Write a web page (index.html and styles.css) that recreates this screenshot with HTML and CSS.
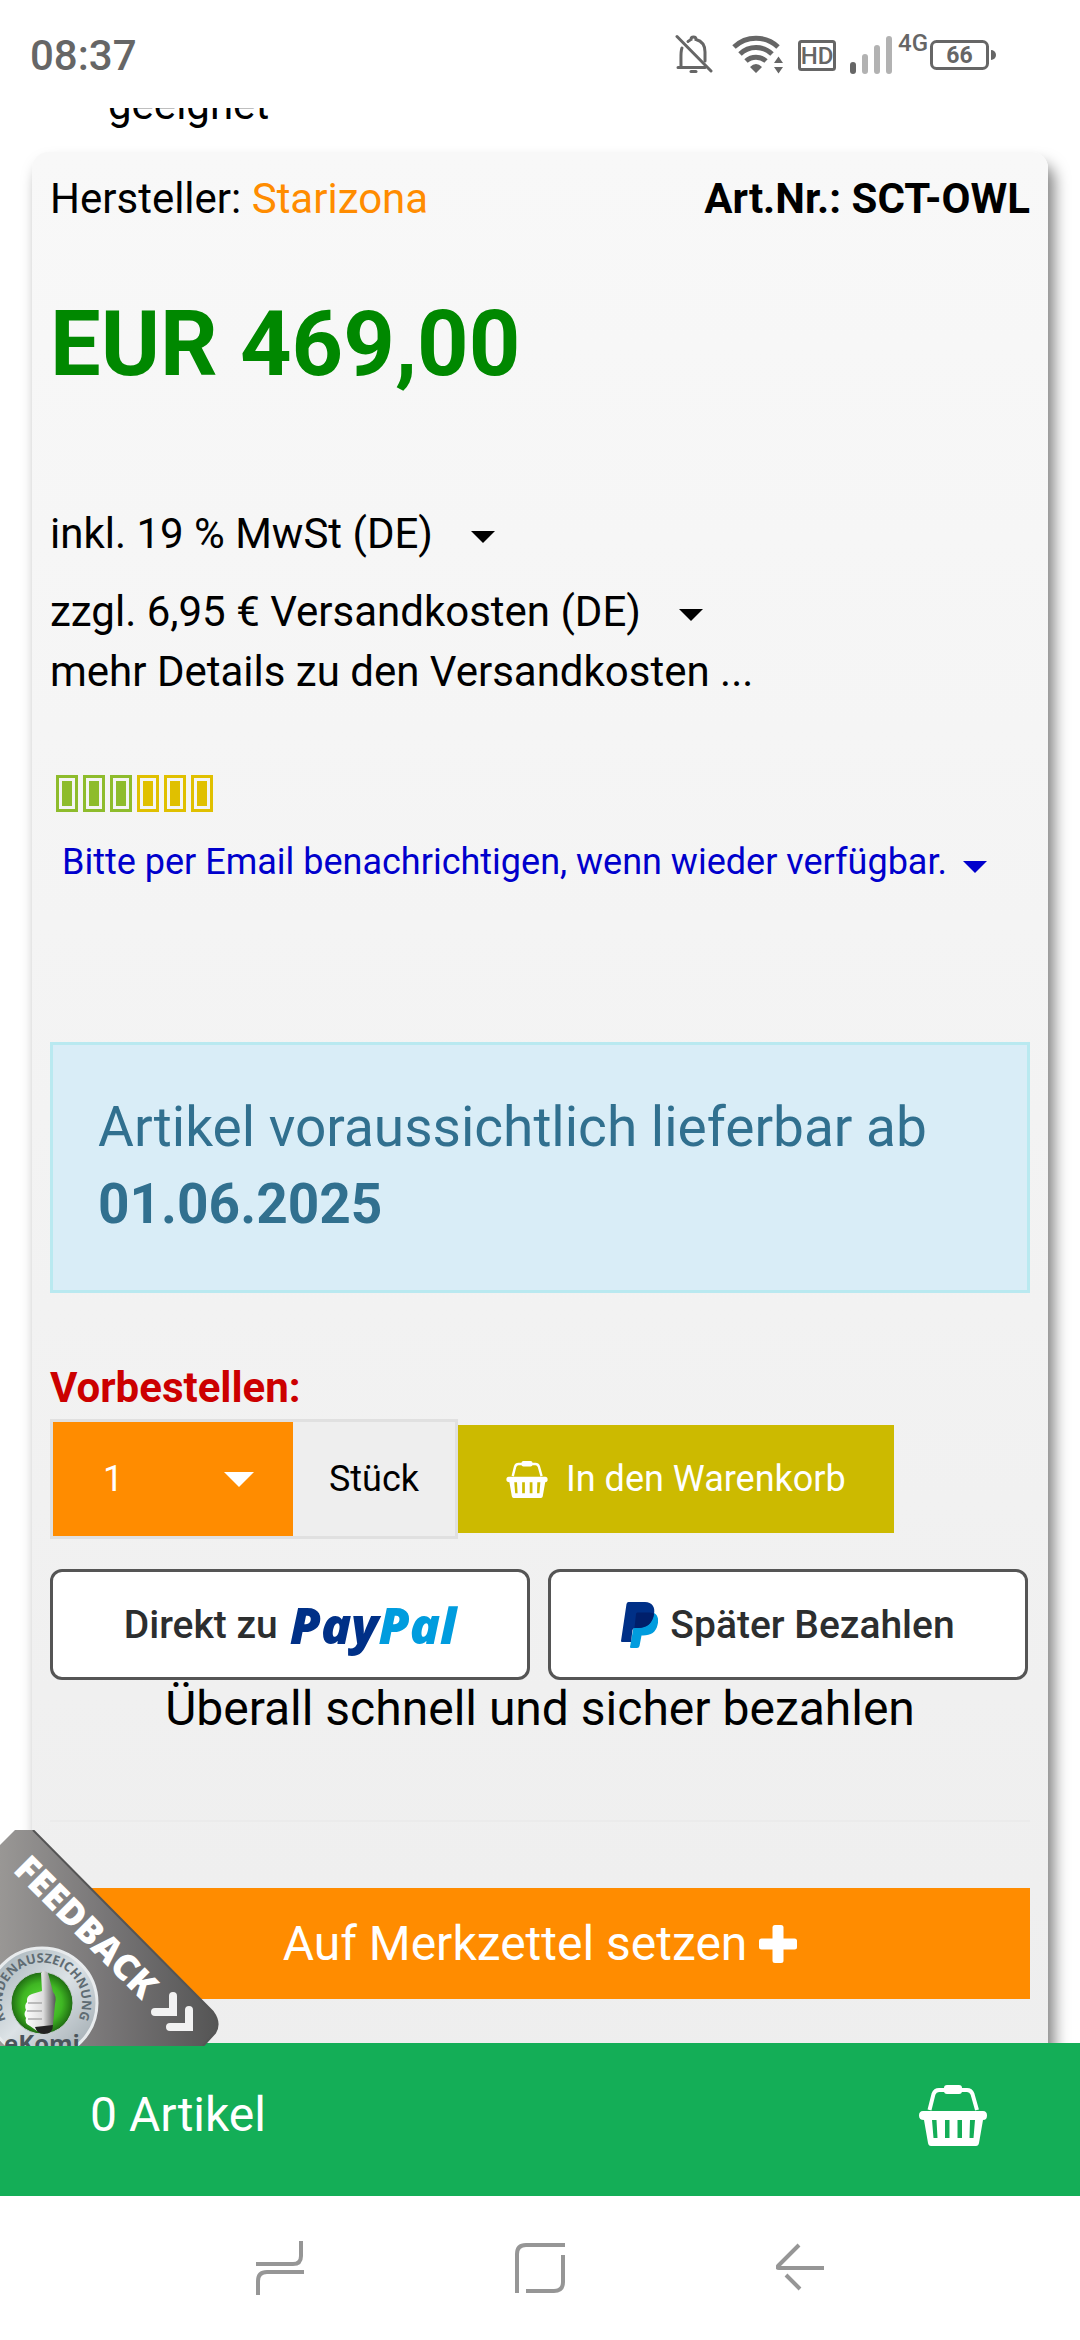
FILE: index.html
```html
<!DOCTYPE html>
<html lang="de">
<head>
  <meta charset="UTF-8">
  <meta name="viewport" content="width=device-width, initial-scale=1.0">
  <title>Starizona SCT-OWL</title>
  <link rel="stylesheet" href="styles.css">
</head>
<body>
  <header class="statusbar">
    <span class="time">08:37</span>
    <div class="status-icons">
      <svg class="ic-bell" width="38" height="40" viewBox="0 0 38 40" fill="none" stroke="#666" stroke-width="3" stroke-linecap="round">
        <path d="M2 2.500 L36 37"/>
        <path d="M7 14 C5.500 17 6 21 6 33 M3 33.500 H30 M13 7.500 C14 6.500 15 6 16 5.500 C16 2 21 2 21 5.500 C27 7 30 12 30 18 V27"/>
        <path d="M16 37.500 H21"/>
      </svg>
      <svg class="ic-wifi" width="52" height="40" viewBox="0 0 52 40">
        <g fill="none" stroke="#666" stroke-width="5">
          <path d="M2 13 A32 32 0 0 1 46 13"/>
          <path d="M8 20 A23 23 0 0 1 40 20"/>
          <path d="M14 27 A15 15 0 0 1 34 27"/>
        </g>
        <path d="M18 33 Q24 27 30 33 L24 39 Z M42 29 L46.500 22.500 L51 29 Z M42 33 L46.500 39.500 L51 33 Z" fill="#666"/>
      </svg>
      <svg class="ic-hd" width="38" height="40" viewBox="0 0 38 40">
        <rect x="1.500" y="7.500" width="35" height="28" rx="2" fill="none" stroke="#666" stroke-width="3"/>
        <text x="19" y="30" text-anchor="middle" font-size="24" font-weight="500" fill="#666">HD</text>
      </svg>
      <svg class="ic-signal" width="42" height="40" viewBox="0 0 42 40" stroke-width="6" stroke-linecap="round">
        <path d="M3 31 V37" stroke="#666"/>
        <path d="M15 23 V37 M27 14 V37 M39 5 V37" stroke="#b2b2b2"/>
      </svg>
      <span class="net">4G</span>
      <svg class="ic-battery" width="66" height="40" viewBox="0 0 66 40">
        <rect x="1.500" y="7.500" width="56" height="27" rx="5" fill="none" stroke="#666" stroke-width="3"/>
        <path d="M61 16 A5 5 0 0 1 61 26 Z" fill="#666"/>
        <text x="29.500" y="29" text-anchor="middle" font-size="23" font-weight="bold" fill="#666">66</text>
      </svg>
    </div>
  </header>

  <main class="content">
    <p class="description">geeignet</p>

    <section class="card">
      <div class="meta">
        <span>Hersteller: <a class="brand" href="#starizona">Starizona</a></span>
        <strong>Art.Nr.: SCT-OWL</strong>
      </div>

      <div class="price">EUR 469,00</div>

      <button class="dropdown tax" type="button">inkl. 19 % MwSt (DE)
        <svg width="24" height="12" viewBox="0 0 24 12"><path d="M0 0 H24 L12 12 Z"/></svg>
      </button>
      <button class="dropdown shipping" type="button">zzgl. 6,95 € Versandkosten (DE)
        <svg width="24" height="12" viewBox="0 0 24 12"><path d="M0 0 H24 L12 12 Z"/></svg>
      </button>
      <a class="details" href="#versand">mehr Details zu den Versandkosten ...</a>

      <div class="stock">
        <i class="green"></i><i class="green"></i><i class="green"></i><i></i><i></i><i></i>
      </div>
      <button class="dropdown notify" type="button">Bitte per Email benachrichtigen, wenn wieder verfügbar.
        <svg width="24" height="12" viewBox="0 0 24 12"><path d="M0 0 H24 L12 12 Z"/></svg>
      </button>

      <div class="alert">Artikel voraussichtlich lieferbar ab <strong>01.06.2025</strong></div>

      <label class="preorder" for="qty">Vorbestellen:</label>
      <div class="buy">
        <div class="qty">
          <div class="qty-select">
            <select id="qty">
              <option>1</option>
              <option>2</option>
              <option>3</option>
            </select>
            <svg width="30" height="15" viewBox="0 0 30 15"><path d="M0 0 H30 L15 15 Z" fill="#fff"/></svg>
          </div>
          <span class="unit">Stück</span>
        </div>
        <button class="cart-btn" type="button">
          <svg width="42" height="37" viewBox="0 0 68 61"><use href="#basket"/></svg>
          In den Warenkorb
        </button>
      </div>

      <div class="paypal">
        <button type="button">Direkt zu <span class="pp-logo">Pay<span>Pal</span></span></button>
        <button type="button">
          <svg width="37" height="46" viewBox="0 0 37 46">
            <path d="M15 11 H33 C37 13 38 18 36.500 23 C35 30 30 33.500 22 33.500 H20.500 L18.500 44 Q18 46 16 46 H10 Q9 46 9 45 Z" fill="#009cde"/>
            <path d="M7.500 0 H24 C31 0 34.500 5 33 12 C31.500 21 26 26 17 26 H13.500 Q12 26 11.500 28 L10 40 H1 Q0 40 0 39 L5.500 2 Q6 0 7.500 0 Z" fill="#003087"/>
            <path d="M16.500 10.500 H29 Q31.500 10.500 33 12 C31.500 21 26 26 17 26 H13.500 L15 12 Q15 10.500 16.500 10.500 Z" fill="#001f6b"/>
          </svg>
          Später Bezahlen
        </button>
      </div>
      <p class="pp-note">Überall schnell und sicher bezahlen</p>

      <hr class="divider">

      <button class="wishlist" type="button">Auf Merkzettel setzen
        <svg width="38" height="38" viewBox="0 0 38 38" fill="#fff"><rect x="13.500" width="11" height="38" rx="2.500"/><rect y="13.500" width="38" height="11" rx="2.500"/></svg>
      </button>
    </section>
  </main>

  <footer class="cartbar">
    <a href="#warenkorb">0 Artikel</a>
    <svg width="68" height="61" viewBox="0 0 68 61">
      <g id="basket" fill="#fff">
        <path d="M10.500 25 L14.500 9 Q16 5 20 5 H48 Q52 5 53.500 9 L58 25" fill="none" stroke="#fff" stroke-width="4"/>
        <rect x="25" y="0" width="18" height="9" rx="3"/>
        <path fill-rule="evenodd" d="M4 26 H64 Q68 26 68 30.500 Q68 35 64 35 L60 58 Q59.500 61 57 61 H12 Q9.500 61 9 58 L5 35 Q0 35 0 30.500 Q0 26 4 26 Z M13 35 L14.500 53 H18.500 L17.500 35 Z M26 35 V53 H30.500 V35 Z M38.500 35 V53 H43 V35 Z M51 35 L50.500 53 H54.500 L56 35 Z"/>
      </g>
    </svg>

    <a class="feedback" href="#feedback" aria-label="Feedback">
      <svg width="219" height="216" viewBox="0 0 219 216">
        <defs>
          <linearGradient id="fb-bg"><stop offset="0" stop-color="#999795"/><stop offset="0.5" stop-color="#777576"/><stop offset="1" stop-color="#555"/></linearGradient>
          <linearGradient id="fb-ring" x1="0" y1="0" x2="1" y2="1"><stop offset="0" stop-color="#9eabb2"/><stop offset="0.5" stop-color="#dce2e6"/><stop offset="1" stop-color="#98a3a9"/></linearGradient>
          <radialGradient id="fb-green"><stop offset="0" stop-color="#5fe03c"/><stop offset="0.65" stop-color="#3fb623"/><stop offset="1" stop-color="#1f6b12"/></radialGradient>
          <linearGradient id="fb-hand"><stop offset="0" stop-color="#fff"/><stop offset="0.6" stop-color="#ddd"/><stop offset="1" stop-color="#555"/></linearGradient>
          <path id="fb-arc" d="M6 190 A40 40 0 1 1 78 190"/>
        </defs>
        <path d="M0 15 L15 0 H33 L213 182 Q221 193 215 203 L203 216 H0 Z" fill="url(#fb-bg)"/>
        <path d="M33 0 L213 182 Q221 193 215 203 L203 216" fill="none" stroke="#555" stroke-width="2"/>
        <g transform="translate(12 41) rotate(45)">
          <text class="fb-text" x="0" y="0">FEEDBACK</text>
        </g>
        <path d="M155 182 H173 V166 M170 197 H189 V180" fill="none" stroke="#f2f2f2" stroke-width="8" stroke-linecap="round"/>
        <circle cx="42" cy="173" r="55" fill="url(#fb-ring)" stroke="#e8ebed" stroke-width="3"/>
        <text class="fb-ring-text"><textPath href="#fb-arc">KUNDENAUSZEICHNUNG</textPath></text>
        <circle cx="42" cy="173" r="31" fill="url(#fb-green)" stroke="#c9d0d4" stroke-width="1"/>
        <path d="M41 143 Q44 139 48 143 L53 162 Q57 166 55 174 L53 194 Q52 201 46 202 L37 201 L30 196 Q24 193 26 188 Q23 184 26 180 Q24 175 27 172 Q26 166 32 164 L42 161 Z" fill="url(#fb-hand)"/>
        <path d="M28 173 H42 M27 181 H42 M28 189 H42" stroke="#aaa" stroke-width="1.500"/>
        <path d="M35 197 L53 195 Q53 204 44 204 Q37 204 35 197 Z" fill="#222"/>
        <text class="fb-name" x="42" y="222" text-anchor="middle">eKomi</text>
      </svg>
    </a>
  </footer>

  <nav class="navbar">
    <button type="button" aria-label="Letzte Apps">
      <svg width="48" height="54" viewBox="0 0 48 54"><path d="M0 23 H37 Q45 23 45 15 V0 M48 31 H11 Q2 31 2 40 V54"/></svg>
    </button>
    <button type="button" aria-label="Startseite">
      <svg width="50" height="50" viewBox="0 0 50 50"><path d="M2 50 V11 Q2 2 11 2 H50 M48 12 V39 Q48 48 39 48 H11"/></svg>
    </button>
    <button type="button" aria-label="Zurück">
      <svg width="48" height="50" viewBox="0 0 48 50"><path d="M23 2 L3 22 Q0 25 3 25 H48 M10 32 L24 46"/></svg>
    </button>
  </nav>
</body>
</html>
```

FILE: styles.css
```css
* { margin:0; padding:0; box-sizing:border-box; }
body {
  display:flex; flex-direction:column; height:100vh; overflow:hidden;
  font-family:Roboto, sans-serif; font-size:42px; line-height:60px; color:#000; background:#fff;
}
button, select { font:inherit; color:inherit; background:none; border:0; cursor:pointer; }
a { color:inherit; text-decoration:none; }
svg { display:block; flex:none; }

/* Statusleiste */
.statusbar { display:flex; justify-content:space-between; align-items:center; flex:none; height:108px; padding:0 84px 0 30px; color:#666; }
.time { font-weight:500; padding-top:3px; }
.status-icons { display:flex; align-items:center; gap:14px; }
.ic-bell { margin-right:5px; }
.net { align-self:flex-start; margin:0 -12px 0 -8px; font-size:24px; line-height:18px; font-weight:500; }

/* Inhalt */
.content { flex:1; min-height:0; overflow:hidden; padding:0 32px; }
.description { margin-top:-33px; padding-left:76px; }
.card {
  display:flex; flex-direction:column; align-items:flex-start;
  margin-top:17px; padding:17px 18px 80px; border-radius:16px;
  background:linear-gradient(#f8f8f8, #eee);
  box-shadow:6px 12px 15px rgba(0,0,0,0.5);
}
.meta { display:flex; justify-content:space-between; width:100%; }
.brand { color:#ff8c00; }
.price { margin-top:62px; font-size:90px; line-height:108px; font-weight:bold; color:#080; }

.dropdown { display:flex; align-items:center; text-align:left; }
.dropdown svg { fill:currentColor; margin:6px 0 0 38px; }
.tax { margin-top:105px; }
.shipping { margin-top:18px; }

/* Lagerampel */
.stock { display:flex; gap:5px; margin:73px 0 0 6px; }
.stock i { width:22px; height:37px; padding:3px; border:3px solid #e0c000; background:#e0c000 content-box; }
.stock .green { border-color:#8ebc2c; background-color:#8ebc2c; }
.notify { margin-top:23px; padding-left:12px; font-size:36px; line-height:54px; color:#00c; }
.notify svg { margin:10px 0 0 16px; }

.alert {
  width:100%; margin-top:153px; padding:44px 45px 47px; border:3px solid #b9e9f0;
  font-size:55px; line-height:77px; color:#31708f; background:#d9edf7;
}
.preorder { margin-top:65px; font-weight:bold; color:#c00; }

/* Menge + Warenkorb */
.buy { display:flex; align-items:center; margin-top:1px; font-size:36px; }
.qty { display:flex; height:120px; border:3px solid #e0e0e0; background:#eee; }
.qty-select { display:grid; align-items:center; width:240px; background:#ff8c00; }
.qty-select > * { grid-area:1 / 1; }
.qty-select select { width:100%; height:100%; padding-left:50px; color:#fff; appearance:none; }
.qty-select svg { justify-self:end; margin-right:39px; pointer-events:none; }
.unit { width:162px; line-height:114px; text-align:center; }
.cart-btn { display:flex; align-items:center; gap:18px; height:108px; padding:0 48px; color:#fff; background:#ccba00; }

/* PayPal */
.paypal { display:flex; gap:18px; width:100%; margin-top:30px; padding-right:2px; }
.paypal button {
  display:flex; flex:1; justify-content:center; align-items:center; gap:12px; height:111px;
  border:3px solid #555; border-radius:12px; font-size:39px; line-height:58px; font-weight:500; color:#2c2e2f; background:#fff;
}
.pp-logo { font-family:"Open Sans", sans-serif; font-size:50px; font-weight:800; font-style:italic; color:#003087; }
.pp-logo span { color:#009cde; }
.pp-note { width:100%; font-size:48px; line-height:58px; text-align:center; }
.divider { width:100%; margin-top:82px; border:0; border-top:2px solid #ebebeb; }
.wishlist {
  display:flex; justify-content:center; align-items:center; gap:12px; width:100%; height:111px;
  margin-top:66px; font-size:48px; color:#fff; background:#ff8c00;
}

/* Warenkorbleiste */
.cartbar {
  position:relative; display:flex; justify-content:space-between; align-items:center; flex:none;
  height:153px; padding:0 93px 9px 90px; font-size:48px; color:#fff; background:#14ae57;
}
.feedback { position:absolute; left:0; bottom:150px; }
.fb-text { font:800 36px "Open Sans", sans-serif; fill:#fff; }
.fb-ring-text { font:bold 13px "Open Sans", sans-serif; fill:#5f6c73; }
.fb-name { font:bold 24px "Open Sans", sans-serif; fill:#4a555b; }

/* Systemnavigation */
.navbar { display:flex; justify-content:space-between; align-items:center; flex:none; height:144px; padding:0 256px; }
.navbar svg { fill:none; stroke:#969696; stroke-width:4; }
```
